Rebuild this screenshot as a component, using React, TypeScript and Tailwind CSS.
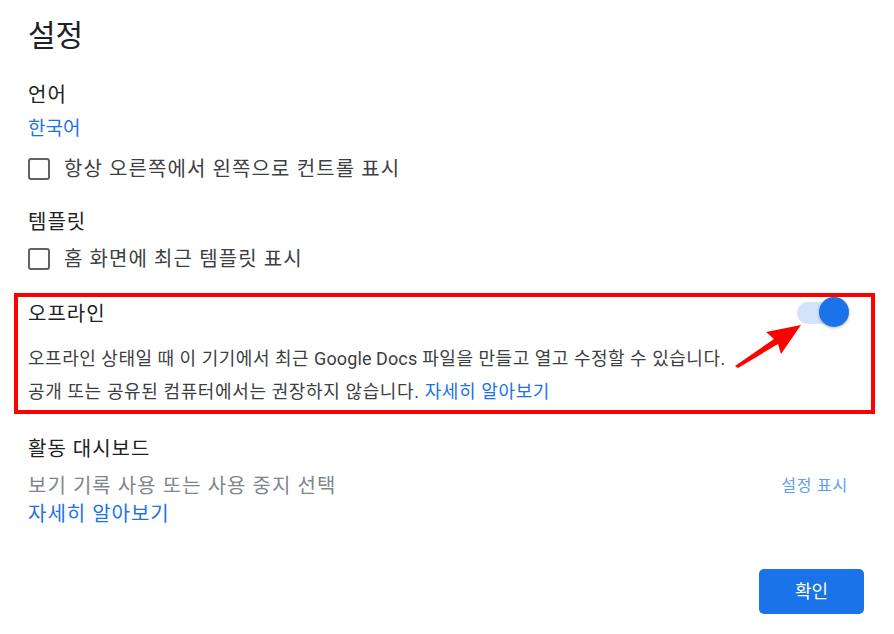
import React from "react";

function Checkbox() {
  return <span className="block w-[22px] h-[22px] border-2 border-[#5f6368] rounded-[3px] shrink-0" />;
}

export default function App() {
  return (
    <div className="relative w-[894px] h-[634px] bg-white overflow-hidden font-['Roboto','Noto_Sans_CJK_KR',sans-serif] text-[#3c4043]">
      <div className="flex flex-col pl-[28px] pr-[19px]">
        <div className="mt-[18px] h-[36px] leading-[36px] text-[30px] text-[#202124]">설정</div>
        <div className="mt-[29px] h-[24px] leading-[24px] text-[20px] tracking-[1px] text-[#202124]">언어</div>
        <div className="mt-[10px] h-[24px] leading-[24px] text-[19px] text-[#1a73e8]">한국어</div>
        <div className="mt-[16px] h-[24px] flex items-center">
          <Checkbox />
          <span className="ml-[14px] leading-[24px] text-[20px] tracking-[1.1px]">항상 오른쪽에서 왼쪽으로 컨트롤 표시</span>
        </div>
        <div className="mt-[29px] h-[24px] leading-[24px] text-[20px] tracking-[1px] text-[#202124]">템플릿</div>
        <div className="mt-[13px] h-[24px] flex items-center">
          <Checkbox />
          <span className="ml-[14px] leading-[24px] text-[20px] tracking-[1.1px]">홈 화면에 최근 템플릿 표시</span>
        </div>

        <div className="mt-[22px] ml-[-14px] h-[121px] border-4 border-[#ff0000] pl-[10px] pr-[22px] pt-[5px] flex flex-col">
          <div className="flex items-center justify-between h-[24px]">
            <span className="leading-[24px] text-[20px] tracking-[1px] text-[#202124]">오프라인</span>
            <div className="relative w-[52px] h-[30px] mt-[-4px]">
              <div className="absolute left-0 top-[5px] w-[44px] h-[22px] rounded-full bg-[#d2e3fc]" />
              <div className="absolute right-0 top-0 w-[30px] h-[30px] rounded-full bg-[#1a73e8] shadow-[0_1px_3px_rgba(0,0,0,0.3)]" />
            </div>
          </div>
          <div className="mt-[21px] h-[24px] leading-[24px] text-[18px] tracking-[0.52px] whitespace-nowrap">
            오프라인 상태일 때 이 기기에서 최근 <span className="tracking-[0.1px]">Google Docs</span> 파일을 만들고 열고 수정할 수 있습니다.
          </div>
          <div className="mt-[9px] h-[24px] leading-[24px] text-[18px] tracking-[0.62px] whitespace-nowrap">
            공개 또는 공유된 컴퓨터에서는 권장하지 않습니다. <span className="text-[#1a73e8]">자세히 알아보기</span>
          </div>
        </div>

        <div className="mt-[23px] h-[24px] leading-[24px] text-[20px] tracking-[1px] text-[#202124]">활동 대시보드</div>
        <div className="mt-[13px] h-[24px] flex items-center justify-between">
          <span className="leading-[24px] text-[20px] tracking-[1.05px] text-[#80868b]">보기 기록 사용 또는 사용 중지 선택</span>
          <span className="leading-[24px] text-[16px] tracking-[0.8px] text-[#5f9cf3] mr-[27px]">설정 표시</span>
        </div>
        <div className="mt-[4px] h-[24px] leading-[24px] text-[20px] tracking-[1px] text-[#1a73e8]">자세히 알아보기</div>

        <div className="mt-[43px] flex justify-end pr-[11px]">
          <button className="w-[105px] h-[45px] rounded-[5px] bg-[#1a73e8] text-white text-[18px]">확인</button>
        </div>
      </div>

      <svg className="absolute inset-0 pointer-events-none" width="894" height="634" viewBox="0 0 894 634">
        <polygon points="801,325 766,332 774,339 735,366 738,368 778,344 781,354" fill="#ff0000" />
      </svg>
    </div>
  );
}
